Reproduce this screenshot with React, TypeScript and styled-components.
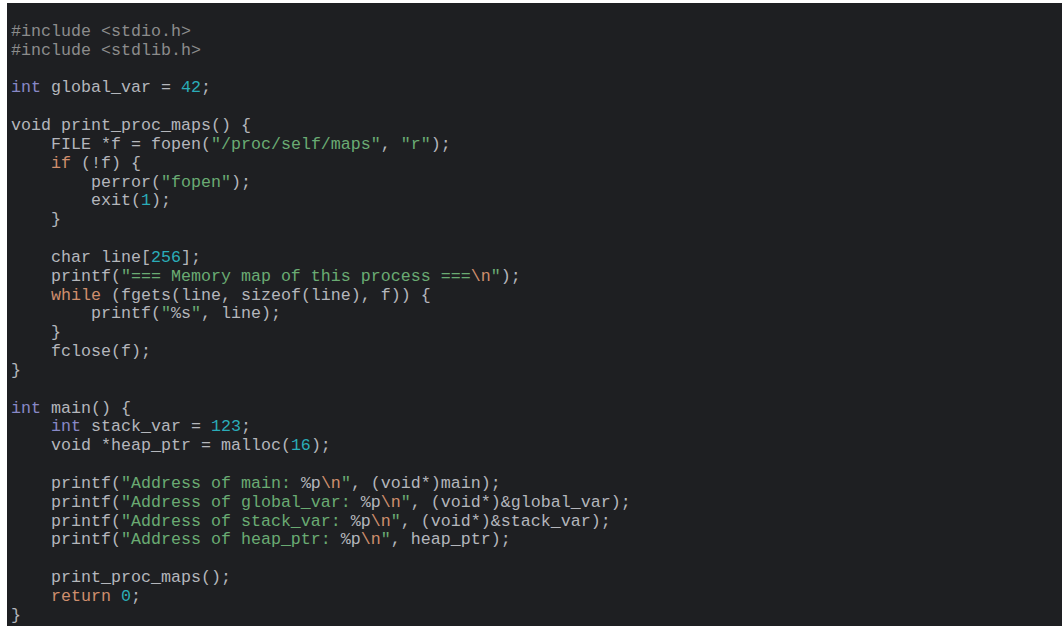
import React from "react";
import styled, { createGlobalStyle } from "styled-components";

const Global = createGlobalStyle`
  html, body { margin: 0; padding: 0; background: #ffffff; }
`;

const Page = styled.div`
  padding: 3px 2px 0 7px;
`;

const CodePanel = styled.pre`
  margin: 0;
  box-sizing: border-box;
  width: 1055px;
  background: #1e1f22;
  color: #bcbec4;
  font-family: "Liberation Mono", "Courier New", monospace;
  font-size: 16.67px;
  line-height: 18.83px;
  padding: 20px 4px 0 4px;
  height: 623px;
  white-space: pre;
  overflow: hidden;
`;

const Line = styled.div`
  height: 18.83px;
`;

type Kind = "t" | "pp" | "ty" | "kw" | "str" | "num" | "esc" | "fmt";

const colors: Record<Kind, string> = {
  t: "#b4b6bc",
  pp: "#8c8c8c",
  ty: "#8888c6",
  kw: "#cf8e6d",
  str: "#6aab73",
  num: "#2aacb8",
  esc: "#cf8e6d",
  fmt: "#b4b6bc",
};

const Tok = styled.span<{ $k: Kind }>`
  color: ${(p) => colors[p.$k]};
`;

type T = [Kind, string];
const L = (...t: T[]) => t;

const code: T[][] = [
  L(["pp", "#include <stdio.h>"]),
  L(["pp", "#include <stdlib.h>"]),
  [],
  L(["ty", "int"], ["t", " global_var = "], ["num", "42"], ["t", ";"]),
  [],
  L(["t", "void print_proc_maps() {"]),
  L(["t", "    FILE *f = fopen("], ["str", "\"/proc/self/maps\""], ["t", ", "], ["str", "\"r\""], ["t", ");"]),
  L(["t", "    "], ["kw", "if"], ["t", " (!f) {"]),
  L(["t", "        perror("], ["str", "\"fopen\""], ["t", ");"]),
  L(["t", "        exit("], ["num", "1"], ["t", ");"]),
  L(["t", "    }"]),
  [],
  L(["t", "    char line["], ["num", "256"], ["t", "];"]),
  L(["t", "    printf("], ["str", "\"=== Memory map of this process ==="], ["esc", "\\n"], ["str", "\""], ["t", ");"]),
  L(["t", "    "], ["kw", "while"], ["t", " (fgets(line, sizeof(line), f)) {"]),
  L(["t", "        printf("], ["str", "\""], ["fmt", "%s"], ["str", "\""], ["t", ", line);"]),
  L(["t", "    }"]),
  L(["t", "    fclose(f);"]),
  L(["t", "}"]),
  [],
  L(["ty", "int"], ["t", " main() {"]),
  L(["t", "    "], ["ty", "int"], ["t", " stack_var = "], ["num", "123"], ["t", ";"]),
  L(["t", "    void *heap_ptr = malloc("], ["num", "16"], ["t", ");"]),
  [],
  L(["t", "    printf("], ["str", "\"Address of main: "], ["fmt", "%p"], ["esc", "\\n"], ["str", "\""], ["t", ", (void*)main);"]),
  L(["t", "    printf("], ["str", "\"Address of global_var: "], ["fmt", "%p"], ["esc", "\\n"], ["str", "\""], ["t", ", (void*)&global_var);"]),
  L(["t", "    printf("], ["str", "\"Address of stack_var: "], ["fmt", "%p"], ["esc", "\\n"], ["str", "\""], ["t", ", (void*)&stack_var);"]),
  L(["t", "    printf("], ["str", "\"Address of heap_ptr: "], ["fmt", "%p"], ["esc", "\\n"], ["str", "\""], ["t", ", heap_ptr);"]),
  [],
  L(["t", "    print_proc_maps();"]),
  L(["t", "    "], ["kw", "return"], ["t", " "], ["num", "0"], ["t", ";"]),
  L(["t", "}"]),
];

export default function App() {
  return (
    <Page>
      <Global />
      <CodePanel>
        {code.map((line, i) => (
          <Line key={i}>
            {line.length === 0
              ? " "
              : line.map(([k, s], j) => (
                  <Tok key={j} $k={k}>
                    {s}
                  </Tok>
                ))}
          </Line>
        ))}
      </CodePanel>
    </Page>
  );
}
